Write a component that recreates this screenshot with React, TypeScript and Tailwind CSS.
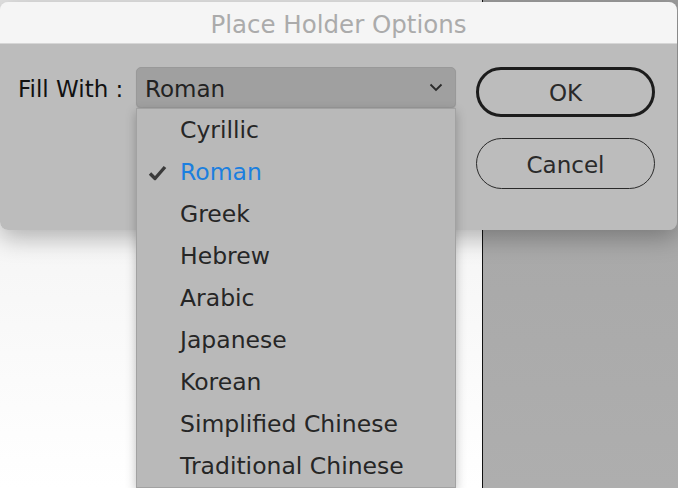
const items = [
  "Cyrillic",
  "Roman",
  "Greek",
  "Hebrew",
  "Arabic",
  "Japanese",
  "Korean",
  "Simplified Chinese",
  "Traditional Chinese",
];

const App = () => {
  return (
    <div className="relative w-[678px] h-[488px] overflow-hidden flex font-['DejaVu_Sans',sans-serif]">
      {/* background windows */}
      <div className="w-[482px] bg-gradient-to-b from-[#e2e2e2] via-[#f6f6f6] to-white" />
      <div className="flex-1 border-l border-[#111] bg-gradient-to-b from-[#9c9c9c] via-[#a9a9a9] to-[#aeaeae]" />

      {/* dialog */}
      <div className="absolute left-0 top-[2px] w-[677px] h-[228px] flex flex-col rounded-lg shadow-[0_8px_24px_rgba(0,0,0,0.28)]">
        <div className="h-[42px] shrink-0 rounded-t-lg bg-[#f5f5f5] border-b border-[#d6d6d6] flex items-center justify-center pt-[5px]">
          <span className="text-[24.5px] text-[#ababab] leading-none">Place Holder Options</span>
        </div>
        <div className="flex-1 rounded-b-lg bg-[#bcbcbc] pt-[23px] flex items-start">
          <div className="w-[136px] h-[41px] pl-[18px] pt-[3px] flex items-center text-[23px] text-[#111]">
            Fill With :
          </div>

          <div className="relative w-[320px]">
            <div className="h-[41px] rounded-[5px] bg-[#a0a0a0] border border-[#999] shadow-[0_1px_1px_rgba(0,0,0,0.15)] flex items-center pl-[8px] pr-[12px]">
              <span className="flex-1 pt-[3px] text-[23px] text-[#222]">Roman</span>
              <svg width="14" height="9" viewBox="0 0 14 9" className="text-[#2a2a2a]">
                <polyline points="1.5,1.5 7,7 12.5,1.5" fill="none" stroke="currentColor" strokeWidth="1.8" />
              </svg>
            </div>

            {/* open menu */}
            <div className="absolute left-0 top-[41px] z-10 w-[320px] bg-[#b9b9b9] border border-[#a2a2a2] shadow-[0_4px_10px_rgba(0,0,0,0.25)]">
              {items.map((item) => (
                <div key={item} className="h-[42px] pt-[2px] flex items-center text-[23.5px]">
                  <div className="w-[43px] flex justify-end pr-[13px]">
                    {item === "Roman" && (
                      <svg width="19" height="16" viewBox="0 0 19 16">
                        <polyline points="2,8.5 7,13.5 17,2" fill="none" stroke="#3a3a3a" strokeWidth="3.4" strokeLinejoin="round" />
                      </svg>
                    )}
                  </div>
                  <span className={item === "Roman" ? "text-[#1b7fdf]" : "text-[#262626]"}>{item}</span>
                </div>
              ))}
            </div>
          </div>

          <div className="ml-[20px] w-[179px] flex flex-col gap-[21px]">
            <button className="h-[50px] pt-[2px] rounded-full border-[3px] border-[#1c1c1c] text-[23px] text-[#2a2a2a]">
              OK
            </button>
            <button className="h-[51px] pt-[4px] rounded-full border-[1.5px] border-[#2a2a2a] text-[23px] text-[#2a2a2a]">
              Cancel
            </button>
          </div>
        </div>
      </div>
    </div>
  );
};

export default App;
